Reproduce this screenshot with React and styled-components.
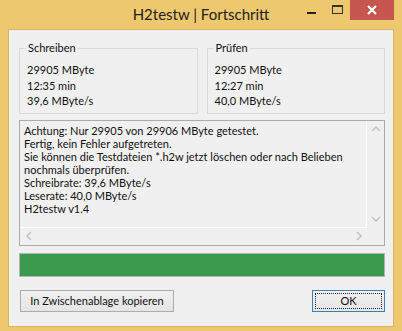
import styled, { createGlobalStyle } from "styled-components";

const GlobalStyle = createGlobalStyle`
  html, body {
    margin: 0;
    padding: 0;
    background: #eec86f;
  }
  body {
    font-family: Lato, "Open Sans", sans-serif;
  }
`;

const Window = styled.div`
  width: 402px;
  height: 331px;
  box-sizing: border-box;
  background: #eec86f;
  padding: 0 8px 4px;
  display: flex;
  flex-direction: column;
`;

const TitleBar = styled.div`
  height: 29px;
  display: grid;
  grid-template-columns: 1fr auto 1fr;
  align-items: start;
  margin: 0 -8px;
  padding: 0 8px;
`;

const Title = styled.div`
  grid-column: 2;
  font-size: 15px;
  line-height: 29px;
  color: #222;
`;

const Controls = styled.div`
  grid-column: 3;
  justify-self: end;
  display: flex;
  align-items: flex-start;
  height: 20px;
`;

const ControlButton = styled.div`
  width: ${(p) => p.$w}px;
  height: 20px;
  display: flex;
  align-items: center;
  justify-content: center;
  background: ${(p) => (p.$close ? "#c7564e" : "transparent")};
`;

const Client = styled.div`
  flex: 1;
  background: #f0f0f0;
  border: 1px solid #d7b462;
  padding: 11px 8px 14px 10px;
  display: flex;
  flex-direction: column;
`;

const Groups = styled.div`
  display: grid;
  grid-template-columns: 1fr 1fr;
  gap: 9px;
`;

const Group = styled.fieldset`
  margin: 0;
  padding: 7px 6px 4px 6px;
  border: 1px solid #d9d9d9;
  min-width: 0;
  font-size: 11px;
  color: #111;
`;

const Legend = styled.legend`
  padding: 0 2px;
  line-height: 14px;
  font-size: 11px;
`;

const GroupRow = styled.div`
  line-height: 15.5px;
  padding-left: 1px;
`;

const Memo = styled.div`
  margin-top: 6px;
  height: 126px;
  box-sizing: border-box;
  border: 1px solid #ababab;
  display: grid;
  grid-template-columns: 1fr 17px;
  grid-template-rows: 1fr 17px;
`;

const MemoText = styled.div`
  border-right: 1px solid #fcfcfc;
  border-bottom: 1px solid #fcfcfc;
  padding: 3px 4px;
  font-size: 11px;
  line-height: 13px;
  color: #111;
  white-space: nowrap;
  overflow: hidden;
`;

const VScroll = styled.div`
  display: flex;
  flex-direction: column;
  justify-content: space-between;
  align-items: center;
`;

const HScroll = styled.div`
  display: flex;
  justify-content: space-between;
  align-items: center;
`;

const ArrowCell = styled.div`
  width: 17px;
  height: 17px;
  display: flex;
  align-items: center;
  justify-content: center;
`;

const Progress = styled.div`
  margin-top: 7px;
  height: 24px;
  box-sizing: border-box;
  border: 1px solid #b4b4b4;
  background: #3b9a4d;
`;

const ButtonRow = styled.div`
  margin-top: 13px;
  display: flex;
  justify-content: space-between;
`;

const Button = styled.button`
  width: ${(p) => p.$w}px;
  height: 22px;
  box-sizing: border-box;
  margin: 0;
  padding: 0;
  border: 1px solid ${(p) => (p.$default ? "#3c7fb1" : "#acacac")};
  background: linear-gradient(#f0f0f0, #e5e5e5);
  font-family: Lato, "Open Sans", sans-serif;
  font-size: 11px;
  color: #111;
  position: relative;
  margin-left: ${(p) => p.$ml || 0}px;
`;

const FocusRing = styled.span`
  position: absolute;
  inset: 2px;
  border: 1px dotted #222;
`;

const Chevron = ({ dir }) => {
  const paths = {
    up: "M1 5 L5 1 L9 5",
    down: "M1 1 L5 5 L9 1",
    left: "M5 1 L1 5 L5 9",
    right: "M1 1 L5 5 L1 9",
  };
  const vertical = dir === "up" || dir === "down";
  return (
    <svg width={vertical ? 10 : 6} height={vertical ? 6 : 10} viewBox={vertical ? "0 0 10 6" : "0 0 6 10"}>
      <path d={paths[dir]} fill="none" stroke="#c4c4c4" strokeWidth="1.6" />
    </svg>
  );
};

const lines = [
  "Achtung: Nur 29905 von 29906 MByte getestet.",
  "Fertig, kein Fehler aufgetreten.",
  "Sie können die Testdateien *.h2w jetzt löschen oder nach Belieben",
  "nochmals überprüfen.",
  "Schreibrate: 39,6 MByte/s",
  "Leserate: 40,0 MByte/s",
  "H2testw v1.4",
];

const App = () => {
  return (
    <>
      <GlobalStyle />
      <Window>
        <TitleBar>
          <Title>H2testw | Fortschritt</Title>
          <Controls>
            <ControlButton $w={26}>
              <svg width="9" height="9" viewBox="0 0 9 9">
                <rect x="0" y="6" width="9" height="2" fill="#222" />
              </svg>
            </ControlButton>
            <ControlButton $w={26}>
              <svg width="11" height="10" viewBox="0 0 11 10">
                <rect x="0.5" y="0.5" width="10" height="8" fill="none" stroke="#333" />
                <rect x="0" y="0" width="11" height="2" fill="#333" />
              </svg>
            </ControlButton>
            <ControlButton $w={44} $close>
              <svg width="10" height="10" viewBox="0 0 10 10">
                <path d="M1 1 L9 9 M9 1 L1 9" stroke="#fff" strokeWidth="2.2" />
              </svg>
            </ControlButton>
          </Controls>
        </TitleBar>
        <Client>
          <Groups>
            <Group>
              <Legend>Schreiben</Legend>
              <GroupRow>29905 MByte</GroupRow>
              <GroupRow>12:35 min</GroupRow>
              <GroupRow>39,6 MByte/s</GroupRow>
            </Group>
            <Group>
              <Legend>Prüfen</Legend>
              <GroupRow>29905 MByte</GroupRow>
              <GroupRow>12:27 min</GroupRow>
              <GroupRow>40,0 MByte/s</GroupRow>
            </Group>
          </Groups>
          <Memo>
            <MemoText>
              {lines.map((l) => (
                <div key={l}>{l}</div>
              ))}
            </MemoText>
            <VScroll>
              <ArrowCell>
                <Chevron dir="up" />
              </ArrowCell>
              <ArrowCell>
                <Chevron dir="down" />
              </ArrowCell>
            </VScroll>
            <HScroll>
              <ArrowCell>
                <Chevron dir="left" />
              </ArrowCell>
              <ArrowCell>
                <Chevron dir="right" />
              </ArrowCell>
            </HScroll>
            <div />
          </Memo>
          <Progress />
          <ButtonRow>
            <Button $w={154} $ml={1}>In Zwischenablage kopieren</Button>
            <Button $w={73} $default>
              <FocusRing />
              OK
            </Button>
          </ButtonRow>
        </Client>
      </Window>
    </>
  );
};

export default App;
